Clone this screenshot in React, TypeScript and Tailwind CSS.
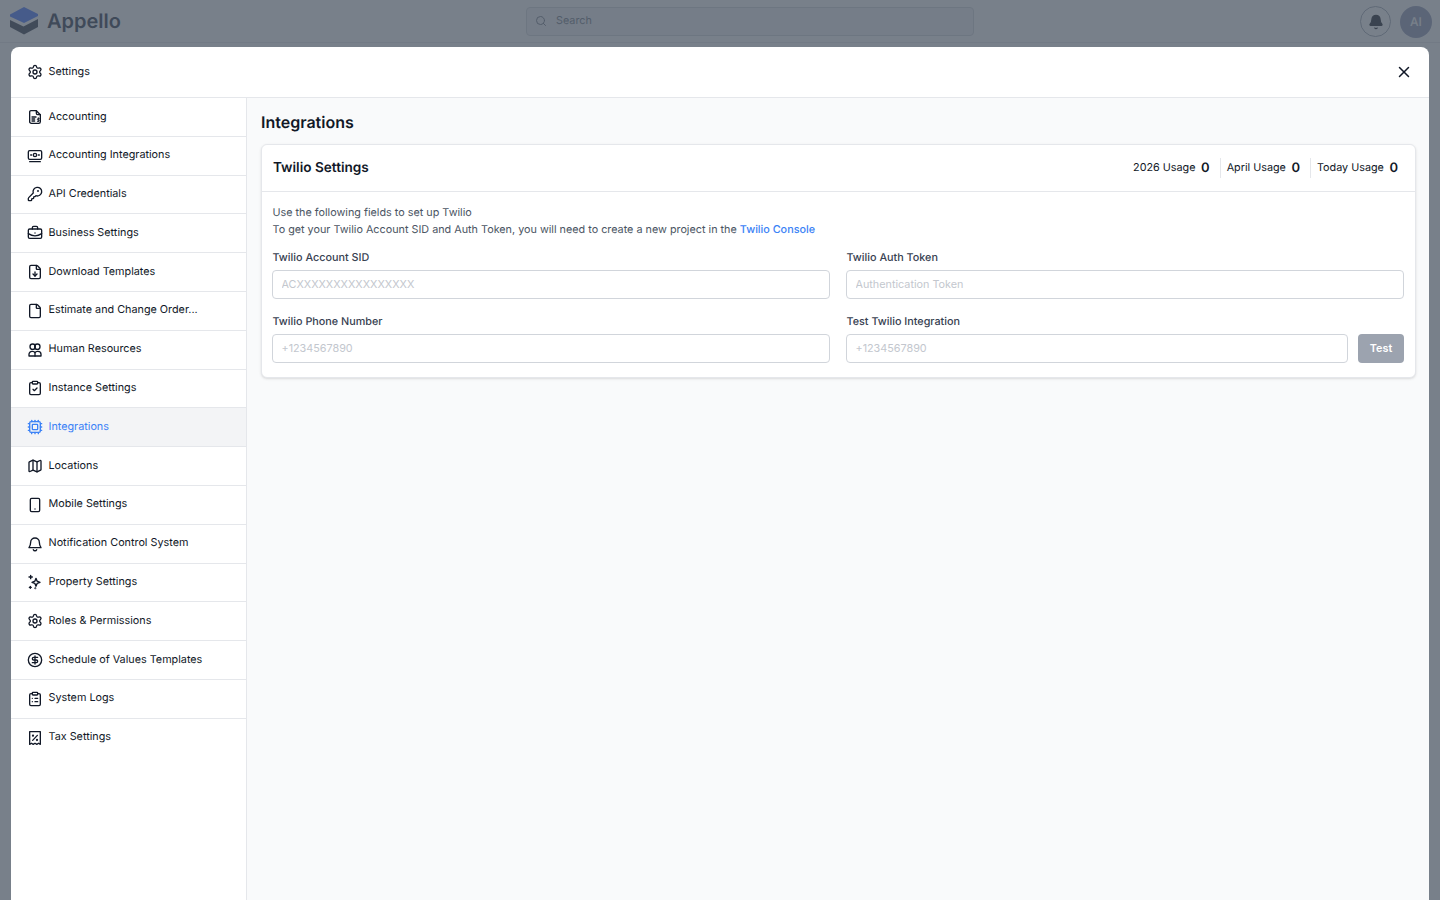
import {
  Bell,
  BriefcaseBusiness,
  CircleDollarSign,
  ClipboardCheck,
  ClipboardList,
  Cpu,
  File,
  FileDown,
  KeyRound,
  Map,
  Search,
  Settings,
  Smartphone,
  X,
} from "lucide-react";
import type { ReactNode } from "react";

function Glyph({ children }: { children: ReactNode }) {
  return (
    <svg
      viewBox="0 0 24 24"
      fill="none"
      stroke="currentColor"
      strokeWidth={2}
      strokeLinecap="round"
      strokeLinejoin="round"
      className="h-4 w-4 shrink-0"
    >
      {children}
    </svg>
  );
}

const AccountingIcon = () => (
  <Glyph>
    <path d="M6 2.5h8l6 6V19a2.5 2.5 0 0 1-2.5 2.5h-11A2.5 2.5 0 0 1 4 19V4.5a2 2 0 0 1 2-2Z" />
    <path d="M14 2.5v4a2 2 0 0 0 2 2h4" />
    <path d="M7.5 12h6M7.5 15h4M7.5 18h4" />
    <path d="M17 13v6M18.5 14.5h-2a1 1 0 0 0 0 2h1a1 1 0 0 1 0 2h-2" strokeWidth={1.3} />
  </Glyph>
);

const MonitorMoneyIcon = () => (
  <Glyph>
    <rect x="2" y="4" width="20" height="13" rx="2" />
    <circle cx="12" cy="10.5" r="2.5" />
    <path d="M5.5 10.5h1.5M17 10.5h1.5M4 20.5h16" />
  </Glyph>
);

const PeopleIcon = () => (
  <Glyph>
    <circle cx="8.5" cy="7" r="4" />
    <circle cx="15.5" cy="7" r="4" />
    <path d="M3 21v-2.5A4.5 4.5 0 0 1 7.5 14h1a4 4 0 0 1 3.5 2 4 4 0 0 1 3.5-2h1a4.5 4.5 0 0 1 4.5 4.5V21Z" />
    <path d="M12 16v5" />
  </Glyph>
);

const NotifyIcon = () => (
  <Glyph>
    <path d="M12 3a6.5 6.5 0 0 0-6.5 6.5c0 4-1.5 6.5-2.5 8h18c-1-1.5-2.5-4-2.5-8A6.5 6.5 0 0 0 12 3Z" />
    <path d="M9.5 20.5a2.7 2.7 0 0 0 5 0" />
  </Glyph>
);

const SparkIcon = () => (
  <Glyph>
    <path d="M13.5 6.5 15.2 10.8 19.5 12.5 15.2 14.2 13.5 18.5 11.8 14.2 7.5 12.5 11.8 10.8Z" />
    <path d="M5.5 2v5M3 4.5h5" />
    <path d="M5 18.5v3M3.5 20h3" />
    <circle cx="12.5" cy="21.5" r="0.5" />
  </Glyph>
);

const TaxIcon = () => (
  <Glyph>
    <path d="M4 2.5h16v19l-2.7-1.6-2.6 1.6-2.7-1.6-2.7 1.6-2.6-1.6L4 21.5Z" />
    <path d="m15.5 8-7 7.5" />
    <circle cx="9" cy="8.5" r="0.7" />
    <circle cx="15" cy="15" r="0.7" />
  </Glyph>
);

const lucideSize = "h-4 w-4 shrink-0";

const menu: { label: string; icon: ReactNode; active?: boolean }[] = [
  { label: "Accounting", icon: <AccountingIcon /> },
  { label: "Accounting Integrations", icon: <MonitorMoneyIcon /> },
  { label: "API Credentials", icon: <KeyRound className={lucideSize} /> },
  { label: "Business Settings", icon: <BriefcaseBusiness className={lucideSize} /> },
  { label: "Download Templates", icon: <FileDown className={lucideSize} /> },
  { label: "Estimate and Change Order...", icon: <File className={lucideSize} /> },
  { label: "Human Resources", icon: <PeopleIcon /> },
  { label: "Instance Settings", icon: <ClipboardCheck className={lucideSize} /> },
  { label: "Integrations", icon: <Cpu className={lucideSize} />, active: true },
  { label: "Locations", icon: <Map className={lucideSize} /> },
  { label: "Mobile Settings", icon: <Smartphone className={lucideSize} /> },
  { label: "Notification Control System", icon: <NotifyIcon /> },
  { label: "Property Settings", icon: <SparkIcon /> },
  { label: "Roles & Permissions", icon: <Settings className={lucideSize} /> },
  { label: "Schedule of Values Templates", icon: <CircleDollarSign className={lucideSize} /> },
  { label: "System Logs", icon: <ClipboardList className={lucideSize} /> },
  { label: "Tax Settings", icon: <TaxIcon /> },
];

function Field({ label, placeholder }: { label: string; placeholder: string }) {
  return (
    <div className="flex flex-col gap-[6px]">
      <label className="h-[13px] pl-[0.5px] text-[10.8px] leading-[13px] font-medium text-[#374151]">{label}</label>
      <input
        placeholder={placeholder}
        className="h-[29px] w-full rounded-[4px] border border-[#d1d5db] bg-white px-[8.5px] text-[10.8px] outline-none placeholder:text-[#c3c7ce]"
      />
    </div>
  );
}

function Usage({ label, divider }: { label: string; divider?: boolean }) {
  return (
    <div className={`flex h-[20px] items-center gap-[5.5px] pr-[10px] ${divider ? "border-l border-[#e5e7eb] pl-[6px]" : ""}`}>
      <span className="text-[10.8px] text-[#111827]">{label}</span>
      <span className="pt-[1px] text-[13px] font-semibold text-[#111827]">0</span>
    </div>
  );
}

function TopBar() {
  return (
    <header className="flex h-[43px] items-center border-b border-[#e5e7eb] bg-white pl-[10px] pr-2">
      <div className="flex w-[516px] items-center gap-[9px]">
        <svg viewBox="0 0 28 28" className="h-[28px] w-[28px]">
          <path d="M14 0 28 7v2L14 16 0 9.5V7.5Z" fill="#3b6cff" />
          <path d="M0 13l13.5 6.5L28 12v8l-14 7.5L0 20Z" fill="#0f172a" opacity="0.9" />
        </svg>
        <span className="text-[20px] leading-none font-semibold text-[#1f2a3f]">Appello</span>
      </div>
      <div className="flex h-[29px] w-[448px] items-center gap-[9px] rounded-[4px] border border-[#d1d5db] bg-[#f3f4f6] pb-[0.5px] pl-[8px]">
        <Search className="h-[12px] w-[12px] text-[#6b7280]" strokeWidth={2} />
        <span className="text-[10.8px] text-[#6b7280]">Search</span>
      </div>
      <div className="ml-auto flex items-center gap-[9px] pt-[1px]">
        <div className="flex h-[31px] w-[31px] items-center justify-center rounded-full border border-[#9ca3af]">
          <Bell className="h-4 w-4 text-[#0b0f19]" fill="currentColor" />
        </div>
        <div className="flex h-[32px] w-[32px] items-center justify-center rounded-full bg-[#8c94b4] text-[12px] font-medium text-white">
          AI
        </div>
      </div>
    </header>
  );
}

export default function App() {
  return (
    <div className="relative h-screen overflow-hidden bg-white font-['Inter',sans-serif] [text-rendering:geometricPrecision]">
      <TopBar />
      {/* modal backdrop + dialog */}
      <div className="absolute inset-0 flex flex-col bg-[#4b5563]/75 px-[11px] pt-[47px]">
        <div className="flex flex-1 flex-col overflow-hidden rounded-t-[8px] bg-white">
          <div className="flex h-[51px] shrink-0 items-center justify-between border-b border-[#e5e7eb] pl-[16px] pr-[16px]">
            <div className="flex items-center gap-[5.5px] text-[#111827]">
              <Settings className="h-4 w-4" />
              <span className="text-[10.8px]">Settings</span>
            </div>
            <X className="h-[18px] w-[18px] text-[#111827]" strokeWidth={2} />
          </div>
          <div className="flex min-h-0 flex-1">
            <nav className="w-[236px] shrink-0 border-r border-[#e5e7eb]">
              {menu.map((item) => (
                <div
                  key={item.label}
                  className={`flex h-[38.8px] items-center gap-[5.5px] border-b border-[#e5e7eb] pl-[16px] last:border-b-transparent ${
                    item.active ? "bg-[#f3f4f6] text-[#3b82f6]" : "text-[#111827]"
                  }`}
                >
                  {item.icon}
                  <span className="text-[10.8px] leading-none">{item.label}</span>
                </div>
              ))}
            </nav>
            <main className="min-w-0 flex-1 bg-[#f9fafb] pl-[14px] pr-[13px] pt-[14px]">
              <h1 className="mb-[11px] text-[16px] leading-[21px] font-semibold text-[#111827]">Integrations</h1>
              <section className="rounded-[6px] border border-[#e5e7eb] bg-white shadow-sm">
                <div className="flex h-[47px] items-center justify-between border-b border-[#e5e7eb] pl-[11px] pr-[7px]">
                  <h2 className="pt-[1px] text-[13.6px] font-semibold text-[#111827]">Twilio Settings</h2>
                  <div className="flex items-center">
                    <Usage label="2026 Usage" />
                    <Usage label="April Usage" divider />
                    <Usage label="Today Usage" divider />
                  </div>
                </div>
                <div className="pl-[10px] pr-[11px] pt-[12px] pb-[14px]">
                  <p className="pl-[0.5px] text-[10.8px] leading-[17px] text-[#4b5563]">
                    Use the following fields to set up Twilio
                    <br />
                    To get your Twilio Account SID and Auth Token, you will need to create a new project in the{" "}
                    <a className="font-medium text-[#3b82f6]">Twilio Console</a>
                  </p>
                  <div className="mt-[13px] grid grid-cols-2 gap-x-[16px] gap-y-[16px]">
                    <Field label="Twilio Account SID" placeholder="ACXXXXXXXXXXXXXXXX" />
                    <Field label="Twilio Auth Token" placeholder="Authentication Token" />
                    <Field label="Twilio Phone Number" placeholder="+1234567890" />
                    <div className="flex items-end gap-[10px]">
                      <div className="flex-1">
                        <Field label="Test Twilio Integration" placeholder="+1234567890" />
                      </div>
                      <button className="h-[29px] w-[46px] rounded-[4px] bg-[#9ca3af] pt-[1px] text-[10.8px] font-semibold text-white">
                        Test
                      </button>
                    </div>
                  </div>
                </div>
              </section>
            </main>
          </div>
        </div>
      </div>
    </div>
  );
}
